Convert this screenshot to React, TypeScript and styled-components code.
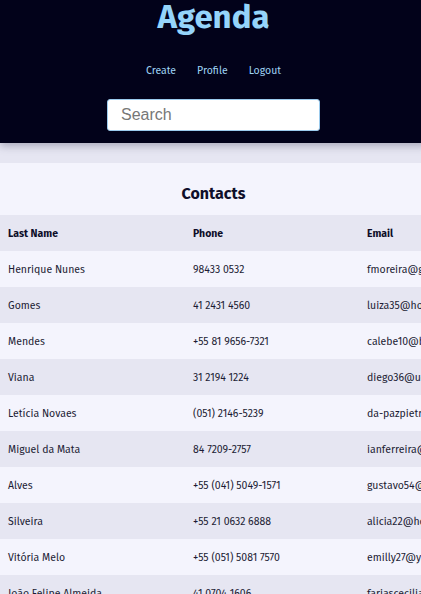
import React, { useState } from 'react';
import styled, { createGlobalStyle } from 'styled-components';

interface Contact {
  lastName: string;
  phone: string;
  email: string;
}

const contacts: Contact[] = [
  { lastName: 'Henrique Nunes', phone: '98433 0532', email: 'fmoreira@gmail.com' },
  { lastName: 'Gomes', phone: '41 2431 4560', email: 'luiza35@hotmail.com' },
  { lastName: 'Mendes', phone: '+55 81 9656-7321', email: 'calebe10@bol.com.br' },
  { lastName: 'Viana', phone: '31 2194 1224', email: 'diego36@uol.com.br' },
  { lastName: 'Letícia Novaes', phone: '(051) 2146-5239', email: 'da-pazpietro@gmail.com' },
  { lastName: 'Miguel da Mata', phone: '84 7209-2757', email: 'ianferreira@yahoo.com.br' },
  { lastName: 'Alves', phone: '+55 (041) 5049-1571', email: 'gustavo54@gmail.com' },
  { lastName: 'Silveira', phone: '+55 21 0632 6888', email: 'alicia22@hotmail.com' },
  { lastName: 'Vitória Melo', phone: '+55 (051) 5081 7570', email: 'emilly27@yahoo.com.br' },
  { lastName: 'João Felipe Almeida', phone: '41 0704 1606', email: 'fariascecilia@bol.com.br' },
  { lastName: 'Costa', phone: '+55 11 3344 9012', email: 'rafaela81@gmail.com' },
];

const GlobalStyle = createGlobalStyle`
  html, body {
    margin: 0;
    padding: 0;
    background: #e6e6f2;
    font-family: 'Fira Sans', 'Noto Sans', sans-serif;
    color: #14142b;
    overflow-x: hidden;
  }
  #root {
    min-width: 427px;
  }
  ::-webkit-scrollbar { display: none; }
`;

const App: React.FC = () => {
  const [search, setSearch] = useState('');

  const visible = contacts.filter(c =>
    `${c.lastName} ${c.phone} ${c.email}`.toLowerCase().includes(search.toLowerCase())
  );

  return (
    <>
      <GlobalStyle />
      <Header>
        <Title>Agenda</Title>
        <Nav>
          <NavLink href="#">Create</NavLink>
          <NavLink href="#">Profile</NavLink>
          <NavLink href="#">Logout</NavLink>
        </Nav>
        <SearchInput
          type="text"
          placeholder="Search"
          value={search}
          onChange={(e) => setSearch(e.target.value)}
        />
      </Header>

      <Main>
        <SectionTitle>Contacts</SectionTitle>
        <TableWrap>
          <Table>
            <thead>
              <tr>
                <Th>Last Name</Th>
                <Th>Phone</Th>
                <Th>Email</Th>
              </tr>
            </thead>
            <tbody>
              {visible.map((c, i) => (
                <Row key={c.email} $even={i % 2 === 1}>
                  <Td>{c.lastName}</Td>
                  <Td>{c.phone}</Td>
                  <Td>{c.email}</Td>
                </Row>
              ))}
            </tbody>
          </Table>
        </TableWrap>
      </Main>
    </>
  );
};

const Header = styled.header`
  background: #02021a;
  display: flex;
  flex-direction: column;
  align-items: center;
  padding: 0 0 12px;
  box-shadow: 0 3px 8px rgba(60, 60, 90, 0.35);
  position: relative;
  z-index: 1;
`;

const Title = styled.h1`
  margin: 0;
  font-size: 33px;
  line-height: 36px;
  font-weight: 700;
  color: #95d4fa;
  margin-top: -1px;
`;

const Nav = styled.nav`
  display: flex;
  gap: 21px;
  margin-top: 29px;
`;

const NavLink = styled.a`
  color: #9fd3f5;
  font-size: 10.5px;
  line-height: 14px;
  text-decoration: none;
`;

const SearchInput = styled.input`
  margin-top: 21px;
  width: 213px;
  height: 32px;
  box-sizing: border-box;
  border: 1px solid #9ccbed;
  border-radius: 3px;
  padding: 0 13px;
  font-family: 'Liberation Sans', Arial, sans-serif;
  font-size: 16px;
  color: #222;
  outline: none;

  &::placeholder {
    color: #777;
  }
`;

const Main = styled.main`
  margin-top: 20px;
  background: #f4f4fd;
  padding-top: 21px;
`;

const SectionTitle = styled.h2`
  margin: 0 0 11px;
  font-size: 16px;
  line-height: 20px;
  font-weight: 700;
  text-align: center;
  color: #0f0f2a;
`;

const TableWrap = styled.div`
  overflow-x: hidden;
`;

const Table = styled.table`
  border-collapse: collapse;
  width: 560px;
  table-layout: fixed;
`;

const Th = styled.th`
  background: #e6e6f2;
  text-align: left;
  font-size: 10.5px;
  font-weight: 700;
  height: 36px;
  padding: 0 8px;
  color: #0d0d28;

  &:nth-child(1) { width: 169px; }
  &:nth-child(2) { width: 158px; }
`;

const Row = styled.tr<{ $even: boolean }>`
  background: ${p => (p.$even ? '#e6e6f2' : '#f4f4fd')};
`;

const Td = styled.td`
  height: 36px;
  padding: 0 8px;
  font-size: 10.5px;
  color: #1c1c34;
  white-space: nowrap;
`;

export default App;
